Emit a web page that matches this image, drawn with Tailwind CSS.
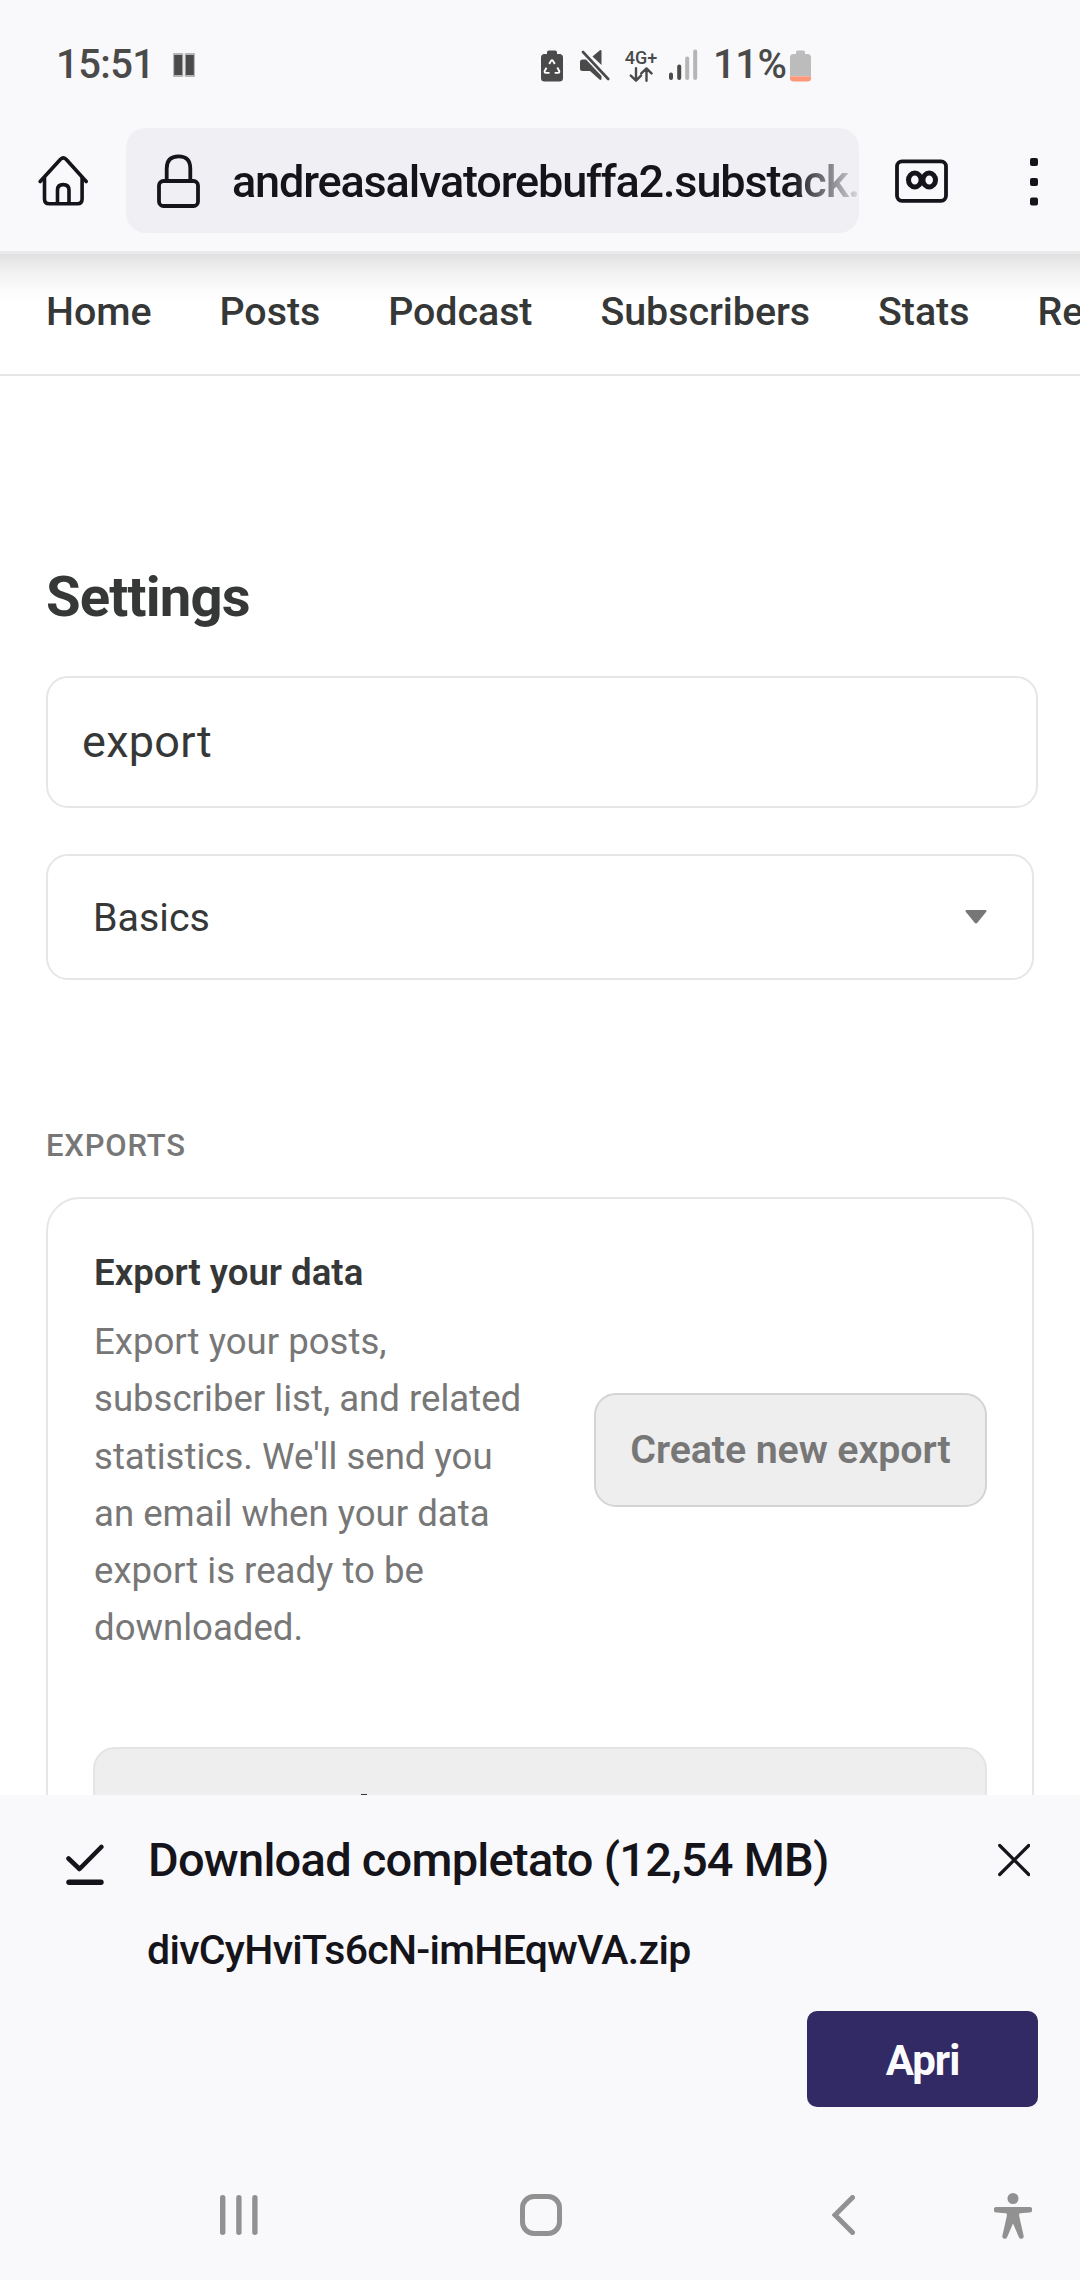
<!DOCTYPE html>
<html lang="en">

<head>
    <meta charset="UTF-8">
    <meta name="viewport" content="width=device-width, initial-scale=1.0">
    <title>Settings</title>
    <script src="https://cdn.jsdelivr.net/npm/@tailwindcss/browser@4"></script>
</head>

<body class="flex flex-col w-[1080px] h-[2280px] overflow-hidden bg-white text-[#363737] font-['Roboto',sans-serif]">
    <header class="flex-none bg-[#f9f9fb] border-b-3 border-[#e9e9ec]">
        <!-- Status bar -->
        <div class="flex items-center h-32 pl-[56px] text-[#4a4a4a] text-[40px] font-medium">
            <span class="w-[117px] pt-[2px] leading-none tracking-[-0.6px]">15:51</span>
            <svg class="w-[22px] h-[24px] mt-[2px]" viewBox="0 0 22 24">
                <rect width="10.3" height="24" rx="1" fill="#b5b5b6" />
                <rect x="11.7" width="10.3" height="24" rx="1" fill="#b5b5b6" />
                <path d="M1.2 2h8v20h-8zM12.8 2h8v20h-8z" fill="#4a4a4a" />
            </svg>
            <svg class="w-[22px] h-[32px] ml-[346px] mt-[3px]" viewBox="0 0 22 32">
                <path d="M6 4V2.200Q6 .5 7.700 .5h6.600Q16 .5 16 2.200V4h2.500Q22 4 22 7.500V28Q22 31.500 18.500 31.500h-15Q0 31.500 0 28V7.500Q0 4 3.500 4z" fill="#4a4a4a" />
                <path d="M8.200 14l1.900-3.200q.9-1.300 1.800 0l1.900 3.200M16.300 17.500l1.800 3.200q.8 1.900-1.200 2.200h-3.200M8.500 22.900H5q-2-.3-1.200-2.200l1.700-3" fill="none" stroke="#fff" stroke-width="1.900" />
            </svg>
            <svg class="w-[30px] h-[32px] ml-[17px] mt-[2px]" viewBox="0 0 30 32" fill="#4a4a4a">
                <path d="M0 13Q0 10.500 2.500 10.500H6L21.500 27v2.500q0 2.200-2 .9L10 22H2.500Q0 22 0 19.500z" />
                <path d="M12.500 7.500L19.600 1.500Q21.500.3 21.500 2.500V16z" />
                <path d="M3 3l25.200 27" stroke="#4a4a4a" stroke-width="2.600" stroke-linecap="round" />
            </svg>
            <div class="flex flex-col items-center w-8 ml-[15px] mr-px mt-[4px]">
                <span class="text-[18px] leading-[16px]">4G+</span>
                <svg class="w-[24px] h-[15px] mt-[1px]" viewBox="0 0 24 15" fill="none" stroke="#4a4a4a" stroke-width="2.400" stroke-linecap="round" stroke-linejoin="round">
                    <path d="M7 1.200v12M1.800 8.600L7 13.600l5-5M17.500 13.800v-12M12.300 6.400l5.200-5 5 5" />
                </svg>
            </div>
            <svg class="w-[29px] h-[31px] ml-[11px] mt-[1px]" viewBox="0 0 29 31">
                <rect x="0" y="23.500" width="4" height="7.500" rx="2" fill="#4a4a4a" />
                <rect x="8.200" y="15.500" width="4" height="15.500" rx="2" fill="#4a4a4a" />
                <rect x="16.200" y="7.500" width="4" height="23.500" rx="2" fill="#b5b5b6" />
                <rect x="24.200" y="0.500" width="4" height="30.500" rx="2" fill="#b5b5b6" />
            </svg>
            <span class="w-[77px] ml-[15px] pt-[2px] leading-none tracking-[-0.5px]">11%</span>
            <svg class="w-[21px] h-[32px] mt-[3px]" viewBox="0 0 21 32">
                <path d="M6 4V2.200Q6 .5 7.700 .5h5.600Q15 .5 15 2.200V4h2.500Q21 4 21 7.500V26H0V7.500Q0 4 3.500 4z" fill="#bcbcbd" />
                <path d="M0 26.200h21V28q0 3.500-3.500 3.500h-14Q0 31.500 0 28z" fill="#fb987a" />
            </svg>
        </div>

        <!-- Browser toolbar -->
        <div class="flex items-center h-[105px] mb-[18px] text-[#15141a]">
            <svg class="w-[50px] h-[52px] ml-[38px]" viewBox="0 0 50 52" fill="none" stroke="currentColor" stroke-width="3.600" stroke-linecap="round" stroke-linejoin="round">
                <path d="M2.200 26.500L22.500 4.200q2.800-2.600 5.600 0L48.200 26.500" />
                <path d="M6.500 23v21q0 4.800 4.800 4.800h28q4.800 0 4.800-4.800V23" />
                <path d="M19.500 48V35q0-5.400 5.700-5.400T31 35v13" />
            </svg>
            <div class="flex items-center w-[733px] h-full ml-[38px] pl-[31px] rounded-[20px] bg-[#f0eff4]">
                <svg class="flex-none w-[43px] h-[54px]" viewBox="0 0 43 54" fill="none" stroke="currentColor" stroke-width="3.800">
                    <rect x="2" y="27" width="39" height="25" rx="4.500" />
                    <path d="M9.700 27V14.500Q9.700 2.300 21.500 2.300t11.800 12.200V27" />
                </svg>
                <div class="flex-1 ml-[32px] mt-[2px] overflow-hidden whitespace-nowrap text-[45px] leading-[60px] tracking-[-1.15px] font-medium [mask-image:linear-gradient(to_right,black_560px,transparent_634px)]">andreasalvatorebuffa2.substack.</div>
            </div>
            <svg class="w-[53px] h-[44px] ml-[36px]" viewBox="0 0 53 44" fill="none" stroke="currentColor">
                <rect x="2" y="2.300" width="49" height="39.500" rx="5" stroke-width="3.800" />
                <ellipse cx="19.800" cy="21" rx="6.300" ry="6.900" stroke-width="5" />
                <ellipse cx="34.200" cy="21" rx="6.300" ry="6.900" stroke-width="5" />
            </svg>
            <svg class="w-[8px] h-[48px] ml-[82px] mt-[2px]" viewBox="0 0 8 48" fill="currentColor">
                <rect width="8" height="8" rx="2" />
                <rect y="20" width="8" height="8" rx="2" />
                <rect y="39.500" width="8" height="8" rx="2" />
            </svg>
        </div>
    </header>

    <main class="relative flex-1 min-h-0 overflow-hidden">
        <div class="absolute inset-x-0 top-0 h-[50px] bg-[linear-gradient(to_bottom,rgba(0,0,0,0.12),rgba(0,0,0,0.085)_18%,rgba(0,0,0,0.05)_38%,rgba(0,0,0,0.015)_70%,transparent)]"></div>
        <nav class="flex items-center gap-[68px] h-[122px] pl-[46px] pb-[5px] border-b-2 border-[#e6e6e6] whitespace-nowrap text-[39.4px] tracking-[-0.05px] font-medium">
            <a href="#">Home</a>
            <a href="#">Posts</a>
            <a href="#">Podcast</a>
            <a href="#">Subscribers</a>
            <a href="#">Stats</a>
            <a href="#">Recommendations</a>
        </nav>

        <div class="pt-[187px] pl-[46px] pr-[46px]">
            <h1 class="text-[56.25px] leading-[68px] tracking-[-0.85px] font-bold">Settings</h1>
            <div class="flex items-center w-[992px] h-[132px] mt-[45px] pl-[34px] border-2 border-[#e6e6e6] rounded-[22px] text-[45px] tracking-[0.3px]">export</div>
            <div class="flex items-center justify-between h-[126px] mt-[46px] pl-[45px] pr-[45px] pt-[2px] border-2 border-[#e6e6e6] rounded-[22px] text-[39.4px]">
                Basics
                <svg class="w-[22px] h-[14px] mb-[3px]" viewBox="0 0 22 14">
                    <path d="M1.800 0h18.400q2 .2.900 2L12.300 12.800q-1.300 1.300-2.600 0L.900 2Q-.2.2 1.800 0z" fill="#777" />
                </svg>
            </div>

            <h2 class="mt-[146px] text-[31px] leading-[40px] tracking-[0.8px] font-medium text-[#777]">EXPORTS</h2>
            <section class="h-[700px] mt-[31px] px-[45px] pt-[49px] border-2 border-[#e6e6e6] rounded-[34px]">
                <div class="flex items-center justify-between text-[36.6px]">
                    <div class="w-[430px] pl-px">
                        <h3 class="mb-[15px] leading-[50px] font-semibold">Export your data</h3>
                        <p class="leading-[57.3px] text-[#777]">Export your posts, subscriber list, and related statistics. We'll send you an email when your data export is ready to be downloaded.</p>
                    </div>
                    <button class="w-[393px] h-[114px] mb-[5px] border-2 border-[#d4d4d4] rounded-[22px] bg-[#eee] text-[39.4px] tracking-[-0.1px] font-semibold text-[#777]">Create new export</button>
                </div>
                <!-- Export list, mostly under the download sheet -->
                <div class="h-[200px] mt-[90px] border-2 border-[#e4e4e4] rounded-[22px] bg-[#eee]">
                    <div class="w-[6px] h-4 mt-[45px] ml-[266px] bg-[#363737]"></div>
                </div>
            </section>
        </div>
    </main>

    <!-- Download sheet -->
    <footer class="flex-none flex flex-col h-[485px] bg-[#f9f9fb] text-[#15141a] font-medium">
        <div class="flex items-center h-[70px] mt-[30px] pl-[66px]">
            <svg class="w-[38px] h-[42px] mt-[10px]" viewBox="0 0 38 42" fill="none" stroke="currentColor" stroke-linecap="round" stroke-linejoin="round">
                <path d="M2.500 14.500L13.500 25 35.300 3" stroke-width="4.600" />
                <path d="M3 38.300h32" stroke-width="5.400" />
            </svg>
            <span class="w-[850px] ml-[44px] text-[47px] leading-[70px] tracking-[-0.75px]">Download completato (12,54 MB)</span>
            <svg class="w-[32px] h-[34px]" viewBox="0 0 32 34" fill="none" stroke="currentColor" stroke-width="3.200" stroke-linecap="round">
                <path d="M1.700 2.500l29 29M30.700 2.500l-29 29" />
            </svg>
        </div>
        <p class="mt-[25px] pl-[147px] text-[41px] leading-[60px] tracking-[-0.7px]">divCyHviTs6cN-imHEqwVA.zip</p>
        <button class="self-end w-[231px] h-24 mt-[31px] mr-[42px] pt-[3px] rounded-[10px] bg-[#312a64] text-[#fbfbfe] text-[42px] tracking-[-1px] font-bold">Apri</button>

        <!-- System navigation -->
        <div class="flex items-center h-[46px] mt-[86px] pl-[220px]">
            <svg class="w-[38px] h-[40px] mb-[2px]" viewBox="0 0 38 40" fill="#919191">
                <rect width="5.400" height="40" rx="2.700" />
                <rect x="16.200" width="5.400" height="40" rx="2.700" />
                <rect x="32.200" width="5.400" height="40" rx="2.700" />
            </svg>
            <svg class="w-[42px] h-[42px] ml-[262px] mb-[2px]" viewBox="0 0 42 42" fill="none" stroke="#919191" stroke-width="5">
                <rect x="2.500" y="2.500" width="37" height="37" rx="11.500" />
            </svg>
            <svg class="w-[23px] h-[40px] ml-[270px] mb-[2px]" viewBox="0 0 23 40" fill="none" stroke="#919191" stroke-width="5" stroke-linecap="round">
                <path d="M20.500 2.500L3 20l17.500 17.500" />
            </svg>
            <svg class="w-[38px] h-[46px] ml-[139px]" viewBox="0 0 38 46" fill="#919191">
                <circle cx="19" cy="5.500" r="5.500" />
                <path d="M2.500 14h33a2.700 2.700 0 0 1 0 5.600L26 20.300q-1 .3-.9 1.700.5 3.500 1.300 6.500l3.300 14.500a2.500 2.500 0 0 1-4.800 1.200L19 30.500l-5.900 13.700A2.500 2.500 0 0 1 8.300 43l3.300-14.500q.9-3 1.300-6.500.1-1.400-.9-1.700l-9.500-.7a2.700 2.700 0 0 1 0-5.600z" />
            </svg>
        </div>
    </footer>
</body>

</html>
